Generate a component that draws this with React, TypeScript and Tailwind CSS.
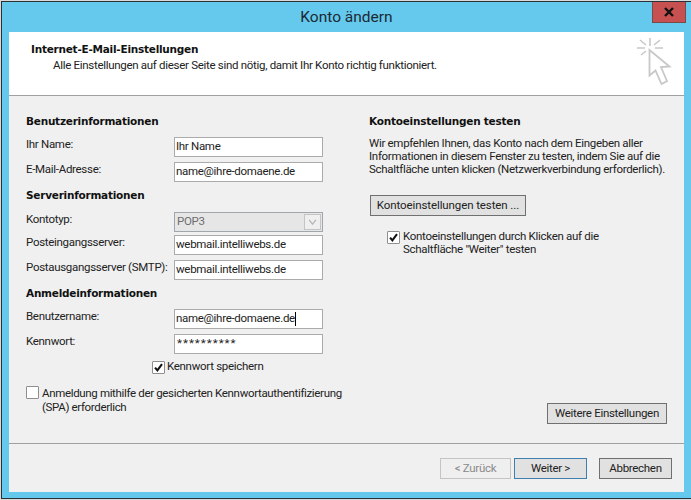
const font = "font-['Roboto','Noto_Sans',sans-serif]";

function Check() {
  return (
    <svg viewBox="0 0 13 13" className="w-[13px] h-[13px] block">
      <path d="M2.4 6.6 L5.2 9.8 L10.6 2.6" fill="none" stroke="#111" strokeWidth="2.4" />
    </svg>
  );
}

function Box({ checked }: { checked?: boolean }) {
  return (
    <span className="w-[13px] h-[13px] shrink-0 bg-white border border-[#8f8f8f] rounded-[1px] flex items-center justify-center">
      {checked ? <Check /> : null}
    </span>
  );
}

function Heading({ children }: { children: React.ReactNode }) {
  return <div className="font-['DejaVu_Sans',sans-serif] font-bold text-[10.5px] leading-[14px] tracking-[-0.24px] text-[#111]">{children}</div>;
}

function Field({ label, value, mt, cursor, valueCls }: { label: string; value: string; mt: string; cursor?: boolean; valueCls?: string }) {
  return (
    <div className={`flex h-[20px] ${mt}`}>
      <div className="w-[148px] shrink-0 whitespace-nowrap leading-[14px] text-[#222]">{label}</div>
      <div className={`w-[149px] h-[20px] bg-white border border-[#ababab] flex items-center pl-[1px] text-[#222] ${valueCls ?? ""}`}>
        {value}
        {cursor ? <span className="w-px h-[14px] bg-black" /> : null}
      </div>
    </div>
  );
}

function Btn({ children, cls }: { children: React.ReactNode; cls: string }) {
  return <div className={`flex items-center justify-center h-[21px] ${cls}`}>{children}</div>;
}

export default function App() {
  return (
    <div className={`w-[691px] h-[500px] overflow-hidden bg-[#d9d9d9] pt-px pl-px text-[11.5px] tracking-[-0.3px] ${font}`}>
      <div className="h-[498px] bg-[#65c9ed] border-t border-l border-b border-[#2a3238] flex flex-col">
        <div className="h-[30px] shrink-0 relative flex items-center justify-center pb-[1px]">
          <span className="text-[15.5px] leading-[20px] tracking-normal text-[#1c2a33] mt-[1px]">Konto ändern</span>
          <div className="absolute right-[5px] top-0 w-[34px] h-[21px] bg-[#c75050] border border-[#7a4a48] border-t-0 flex items-center justify-center">
            <svg viewBox="0 0 12 10" className="w-[12px] h-[10px]">
              <path d="M2 1 L10 9 M10 1 L2 9" stroke="#111" strokeWidth="2.4" fill="none" />
            </svg>
          </div>
        </div>

        <div className="ml-[7px] mr-[7px] h-[460px] flex flex-col">
          <div className="h-[64px] shrink-0 bg-white border-b border-[#a0a0a0] relative pl-[22px] pt-[10px]">
            <div className="font-['DejaVu_Sans',sans-serif] font-bold text-[10.5px] leading-[15px] tracking-[-0.24px] text-[#111]">Internet-E-Mail-Einstellungen</div>
            <div className="pl-[22px] leading-[16px] text-[#222]">Alle Einstellungen auf dieser Seite sind nötig, damit Ihr Konto richtig funktioniert.</div>
            <svg viewBox="0 0 36 50" className="absolute left-[627px] top-[5px] w-[36px] h-[50px]" fill="none" stroke="#c8c8c8">
              <path d="M14 1 V9 M1 11 H9 M19 11 H27 M4 3 L10 8 M24 3 L18 8 M5 18 L10 14" strokeWidth="1.6" />
              <path d="M13.5 13 L33.5 29.5 L25 30 L31 44 L25.5 47 L19.5 33.5 L13.5 38.5 Z" strokeWidth="1.8" fill="#fff" />
            </svg>
          </div>

          <div className="h-[348px] shrink-0 bg-[#f0f0f0] border-b border-[#a0a0a0] flex">
            <div className="w-[343px] shrink-0 pl-[17px] pt-[18px]">
              <Heading>Benutzerinformationen</Heading>
              <Field label="Ihr Name:" value="Ihr Name" mt="mt-[9px]" />
              <Field label="E-Mail-Adresse:" value="name@ihre-domaene.de" mt="mt-[5px]" />
              <div className="mt-[6px]"><Heading>Serverinformationen</Heading></div>
              <div className="flex h-[20px] mt-[10px]">
                <div className="w-[148px] shrink-0 leading-[14px] text-[#222]">Kontotyp:</div>
                <div className="w-[149px] h-[20px] bg-[#e6e6e6] border border-[#9fa6ad] flex items-center justify-between pl-[2px] text-[#6d6d6d]">
                  POP3
                  <span className="w-[17px] h-[16px] mr-px bg-[#efefef] border border-[#c4c4c4] flex items-center justify-center">
                    <svg viewBox="0 0 10 7" className="w-[9px] h-[6px]"><path d="M1 1 L5 6 L9 1" fill="none" stroke="#b0b0b0" strokeWidth="1.3" /></svg>
                  </span>
                </div>
              </div>
              <Field label="Posteingangsserver:" value="webmail.intelliwebs.de" mt="mt-[3px]" />
              <Field label="Postausgangsserver (SMTP):" value="webmail.intelliwebs.de" mt="mt-[5px]" />
              <div className="mt-[6px]"><Heading>Anmeldeinformationen</Heading></div>
              <Field label="Benutzername:" value="name@ihre-domaene.de" mt="mt-[9px]" cursor />
              <Field label="Kennwort:" value="**********" mt="mt-[5px]" valueCls="tracking-[1px] pl-[2px]" />
              <div className="flex items-center gap-[2px] ml-[126px] mt-[5px] h-[16px] text-[#222]">
                <Box checked />
                Kennwort speichern
              </div>
              <div className="flex gap-[3px] mt-[11px] leading-[14px] tracking-[-0.34px] text-[#222]">
                <Box />
                <div className="w-[305px]">Anmeldung mithilfe der gesicherten Kennwortauthentifizierung (SPA) erforderlich</div>
              </div>
            </div>

            <div className="w-[331px] shrink-0 pl-[17px] pr-[16px] pt-[18px] flex flex-col">
              <Heading>Kontoeinstellungen testen</Heading>
              <div className="mt-[9px] leading-[13px] text-[#222]">
                <div className="whitespace-nowrap">Wir empfehlen Ihnen, das Konto nach dem Eingeben aller</div>
                <div className="whitespace-nowrap">Informationen in diesem Fenster zu testen, indem Sie auf die</div>
                <div className="whitespace-nowrap">Schaltfläche unten klicken (Netzwerkverbindung erforderlich).</div>
              </div>
              <Btn cls="mt-[19px] ml-[1px] w-[156px] bg-[#e1e1e1] border border-[#707070] text-[#222] tracking-[-0.1px]">Kontoeinstellungen testen ...</Btn>
              <div className="flex gap-[3px] mt-[14px] ml-[18px] leading-[13px] text-[#222]">
                <span className="mt-px"><Box checked /></span>
                <div>Kontoeinstellungen durch Klicken auf die<br />Schaltfläche "Weiter" testen</div>
              </div>
              <Btn cls="mt-auto mb-[19px] self-end w-[120px] bg-[#e1e1e1] border border-[#707070] text-[#222]">Weitere Einstellungen</Btn>
            </div>
          </div>

          <div className="flex-1 bg-[#f0f0f0] flex items-start pl-[431px] pt-[14px]">
            <Btn cls="w-[71px] bg-[#efefef] border border-[#c4c4c4] text-[#8a8a8a]">&lt; Zurück</Btn>
            <Btn cls="w-[73px] ml-[3px] bg-[#e1e1e1] border border-[#3f7fad] text-[#222]">Weiter &gt;</Btn>
            <Btn cls="w-[73px] ml-[12px] bg-[#e1e1e1] border border-[#707070] text-[#222]">Abbrechen</Btn>
          </div>
        </div>
      </div>
    </div>
  );
}
